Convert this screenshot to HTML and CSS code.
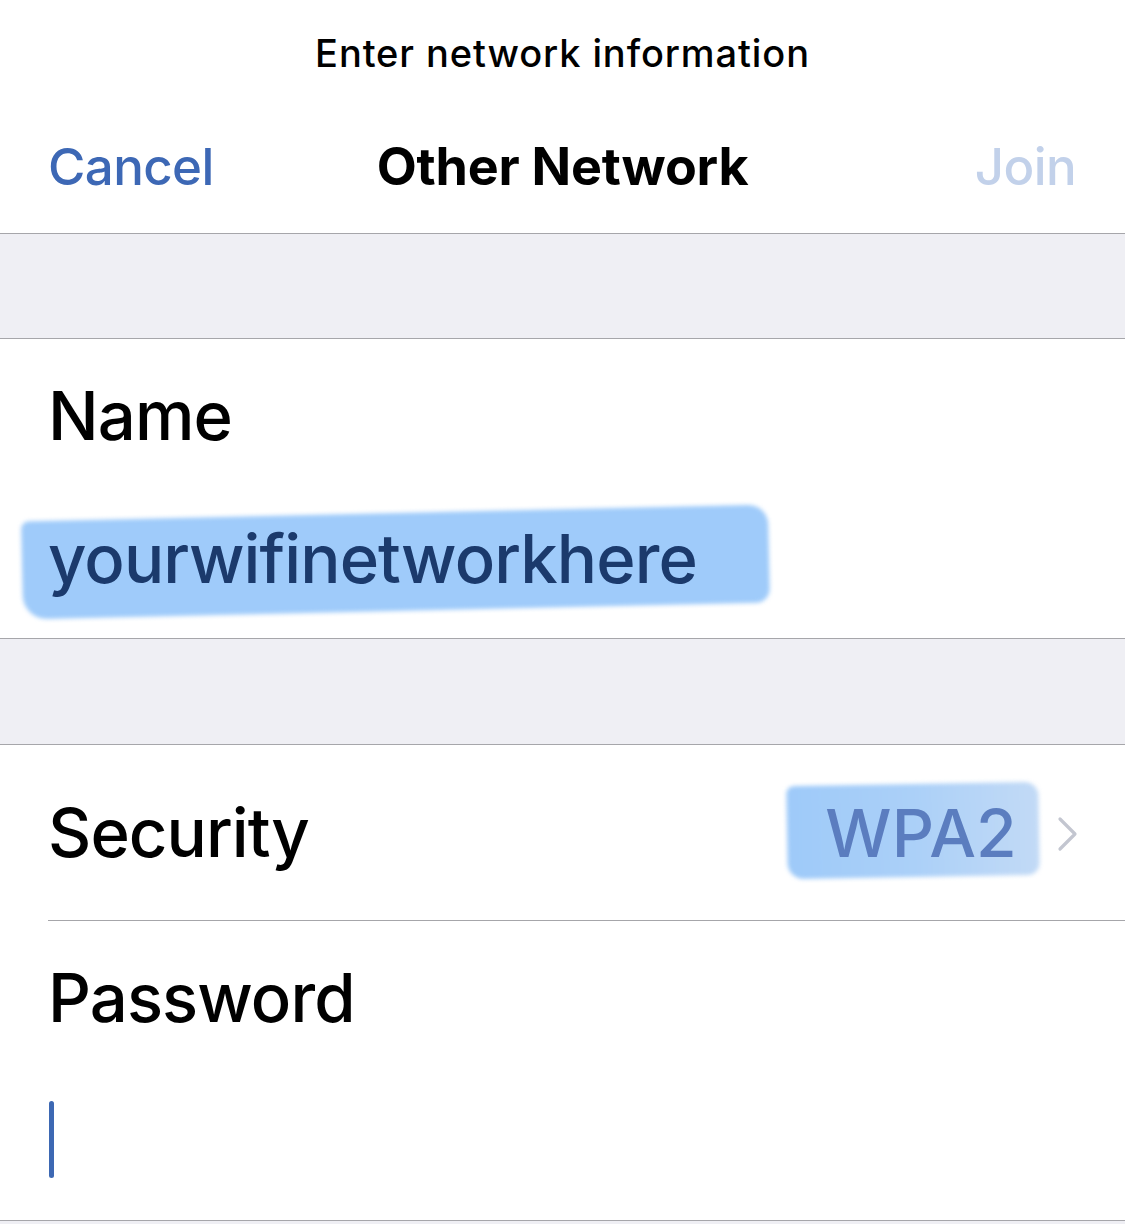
FILE: index.html
```html
<!DOCTYPE html>
<html>
<head>
<meta charset="utf-8">
<link rel="stylesheet" href="styles.css">
</head>
<body>
<div class="screen">
  <header class="header">
    <div class="prompt">Enter network information</div>
    <div class="nav">
      <span class="nav-btn cancel">Cancel</span>
      <span class="nav-title">Other Network</span>
      <span class="nav-btn join">Join</span>
    </div>
  </header>
  <div class="gap gap-a"></div>
  <section class="group">
    <div class="cell field">
      <div class="label">Name</div>
      <div class="value"><span class="marked name-mark">yourwifinetworkhere</span></div>
    </div>
  </section>
  <div class="gap gap-b"></div>
  <section class="group">
    <div class="cell row">
      <div class="label">Security</div>
      <div class="detail">
        <span class="marked wpa-mark">WPA2</span>
        <svg class="chevron" width="22" height="36" viewBox="0 0 22 36"><path d="M3 3 L18 18 L3 33" fill="none" stroke="#c3c6d0" stroke-width="3.2" stroke-linecap="round" stroke-linejoin="round"/></svg>
      </div>
    </div>
    <div class="sep"></div>
    <div class="cell field">
      <div class="label">Password</div>
      <div class="value"><span class="cursor"></span></div>
    </div>
  </section>
  <div class="gap gap-c"></div>
</div>
</body>
</html>
```

FILE: styles.css
```css
html, body {
  margin: 0;
  padding: 0;
  background: #ffffff;
}
body {
  font-family: Inter, "Liberation Sans", Arial, sans-serif;
  color: #000;
  width: 1125px;
  height: 1224px;
  overflow: hidden;
}
.screen {
  display: flex;
  flex-direction: column;
  width: 1125px;
  background: #efeff4;
  min-height: 1224px;
}
.header {
  background: #fff;
  box-sizing: border-box;
  border-bottom: 1px solid #a6a6aa;
  height: 234px;
  padding-top: 31px;
  display: flex;
  flex-direction: column;
}
.prompt {
  font-size: 38px;
  font-weight: 500;
  line-height: 44px;
  height: 44px;
  text-align: center;
  letter-spacing: 0.9px;
}
.nav {
  margin-top: 62px;
  height: 60px;
  line-height: 60px;
  display: flex;
  align-items: center;
  justify-content: space-between;
  padding: 0 49px 0 48px;
  position: relative;
}
.nav-btn {
  font-size: 51px;
  font-weight: 500;
  letter-spacing: -0.6px;
}
.cancel {
  color: #3d68b5;
}
.join {
  color: #c2d1ea;
}
.nav-title {
  font-size: 52px;
  font-weight: 700;
  position: absolute;
  left: 0;
  right: 0;
  text-align: center;
  pointer-events: none;
  letter-spacing: -0.2px;
}
.gap-a { height: 104px; }
.gap-b { height: 105px; }
.gap-c { flex: 1; }
.group {
  background: #fff;
  border-top: 1px solid #a6a6aa;
  border-bottom: 1px solid #a6a6aa;
}
.cell {
  padding-left: 48px;
}
.field {
  height: 298px;
  box-sizing: border-box;
  padding-top: 37px;
  display: flex;
  flex-direction: column;
  gap: 63px;
}
.label {
  font-size: 67px;
  line-height: 80px;
  height: 80px;
  font-weight: 500;
  letter-spacing: -0.9px;
}
.value {
  font-size: 67px;
  line-height: 80px;
  height: 80px;
}
.marked {
  position: relative;
  display: inline-block;
  z-index: 0;
}
.marked::before {
  content: "";
  position: absolute;
  z-index: -1;
  filter: blur(2px);
}
.name-mark {
  color: #1b3a6c;
  font-weight: 500;
  letter-spacing: -0.9px;
}
.name-mark::before {
  left: -26px;
  right: -72px;
  top: -6px;
  bottom: -12px;
  background: #9fcbfa;
  border-radius: 8px 20px 14px 24px;
  transform: rotate(-1.3deg);
}
.row {
  height: 175px;
  box-sizing: border-box;
  display: flex;
  align-items: center;
  justify-content: space-between;
  padding-right: 46px;
}
.detail {
  display: flex;
  align-items: center;
  gap: 40px;
}
.wpa-mark {
  font-size: 66px;
  line-height: 80px;
  font-weight: 500;
  color: #5b7dbf;
  letter-spacing: 0.2px;
}
.wpa-mark::before {
  left: -38px;
  right: -22px;
  top: -9px;
  bottom: -4px;
  background: linear-gradient(90deg, #9ecaf9 0%, #abd0f8 50%, #c2daf6 100%);
  border-radius: 8px 14px 12px 16px;
  transform: rotate(-1deg);
}
.chevron {
  display: block;
  margin-top: 2px;
}
.sep {
  height: 1px;
  margin-left: 48px;
  background: #a6a6aa;
}
.field:last-child {
  height: 299px;
}
.cursor {
  display: block;
  width: 5px;
  height: 77px;
  margin-left: 1px;
  border-radius: 3px;
  background: #3d68b3;
}
```
